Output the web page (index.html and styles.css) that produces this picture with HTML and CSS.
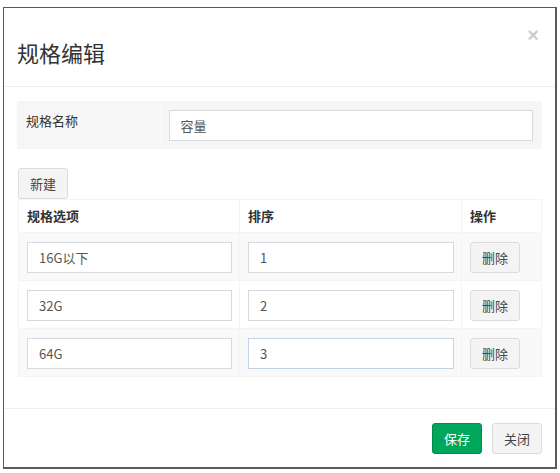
FILE: index.html
```html
<!DOCTYPE html>
<html lang="zh-CN">
<head>
<meta charset="utf-8">
<title>规格编辑</title>
<link rel="stylesheet" href="styles.css">
</head>
<body>
<div class="modal">
  <div class="modal-header">
    <h4 class="modal-title">规格编辑</h4>
    <button class="close" type="button">×</button>
  </div>
  <div class="modal-body">
    <table class="name-table">
      <tr>
        <td class="name-label">规格名称</td>
        <td class="name-field"><input class="form-control" type="text" value="容量"></td>
      </tr>
    </table>
    <button class="btn btn-default btn-new" type="button">新建</button>
    <table class="grid">
      <colgroup>
        <col class="col-name">
        <col class="col-sort">
        <col class="col-op">
      </colgroup>
      <thead>
        <tr><th>规格选项</th><th>排序</th><th>操作</th></tr>
      </thead>
      <tbody>
        <tr class="odd">
          <td><input class="form-control" type="text" value="16G以下"></td>
          <td><input class="form-control" type="text" value="1"></td>
          <td><button class="btn btn-default" type="button">删除</button></td>
        </tr>
        <tr>
          <td><input class="form-control" type="text" value="32G"></td>
          <td><input class="form-control" type="text" value="2"></td>
          <td><button class="btn btn-default" type="button">删除</button></td>
        </tr>
        <tr class="odd">
          <td><input class="form-control" type="text" value="64G"></td>
          <td><input class="form-control focus" type="text" value="3"></td>
          <td><button class="btn btn-default" type="button">删除</button></td>
        </tr>
      </tbody>
    </table>
  </div>
  <div class="modal-footer">
    <button class="btn btn-success" type="button">保存</button>
    <button class="btn btn-default" type="button">关闭</button>
  </div>
</div>
</body>
</html>
```
FILE: styles.css
```css
* { box-sizing: border-box; }
html, body { margin: 0; padding: 0; background: #fff; }
body {
  font-family: "Noto Sans CJK SC", "Noto Sans", "Liberation Sans", sans-serif;
  font-size: 13px;
  color: #333;
}
.modal {
  margin: 7px 3px 0 3px;
  border: 1px solid #5a5a5a;
  border-right-width: 2px;
  border-bottom-width: 2px;
  background: #fff;
  position: relative;
}
.modal-header {
  padding: 31px 14px 21px 13px;
  border-bottom: 1px solid #eceef0;
}
.modal-title {
  margin: 0;
  font-size: 22px;
  font-weight: normal;
  line-height: 26px;
  color: #333;
}
.close {
  position: absolute;
  top: 17px;
  right: 16px;
  border: 0;
  background: transparent;
  padding: 0;
  font-family: "Liberation Sans", sans-serif;
  font-size: 20px;
  font-weight: bold;
  line-height: 20px;
  color: #000;
  opacity: 0.2;
}
.modal-body {
  padding: 14px 13px 31px 13px;
}
.name-table {
  width: 100%;
  border-collapse: collapse;
  background: #f6f6f6;
}
.name-label {
  width: 143px;
  padding: 11px 9px 8px 9px;
  vertical-align: top;
  color: #333;
  line-height: 18px;
  border-right: 1px solid #fafafa;
}
.name-field {
  padding: 9px 9px 8px 8px;
}
.form-control {
  display: block;
  width: 100%;
  height: 31px;
  padding: 0 11px;
  border: 1px solid #d6d9e0;
  border-radius: 0;
  background: #fff;
  font-family: inherit;
  font-size: 13px;
  color: #555;
  outline: none;
}
.form-control.focus { border-color: #c4d3e6; }
.btn {
  display: inline-block;
  height: 31px;
  padding: 0 11px;
  border: 1px solid #dcdcdc;
  border-radius: 3px;
  background: #f4f4f4;
  font-family: inherit;
  font-size: 13px;
  line-height: 29px;
  color: #444;
  cursor: pointer;
}
.btn-new {
  margin: 19px 0 0 1px;
  display: block;
}
.btn-success {
  background: #00a65a;
  border-color: #008d4c;
  color: #fff;
}
.grid {
  width: 524px;
  margin-left: 1px;
  border-collapse: collapse;
  border: 1px solid #f4f4f4;
}
.col-name { width: 221px; }
.col-sort { width: 222px; }
.grid th {
  text-align: left;
  font-weight: bold;
  padding: 8px 8px 8px 8px;
  line-height: 16px;
  border: 1px solid #f4f4f4;
  color: #333;
}
.grid td {
  padding: 9px 7px 7px 8px;
  border: 1px solid #f4f4f4;
  vertical-align: top;
}
.grid tr.odd td { background: #f9f9f9; }
.modal-footer {
  border-top: 1px solid #eceef0;
  padding: 14px 13px 13px 13px;
  display: flex;
  justify-content: flex-end;
  gap: 10px;
}
```
